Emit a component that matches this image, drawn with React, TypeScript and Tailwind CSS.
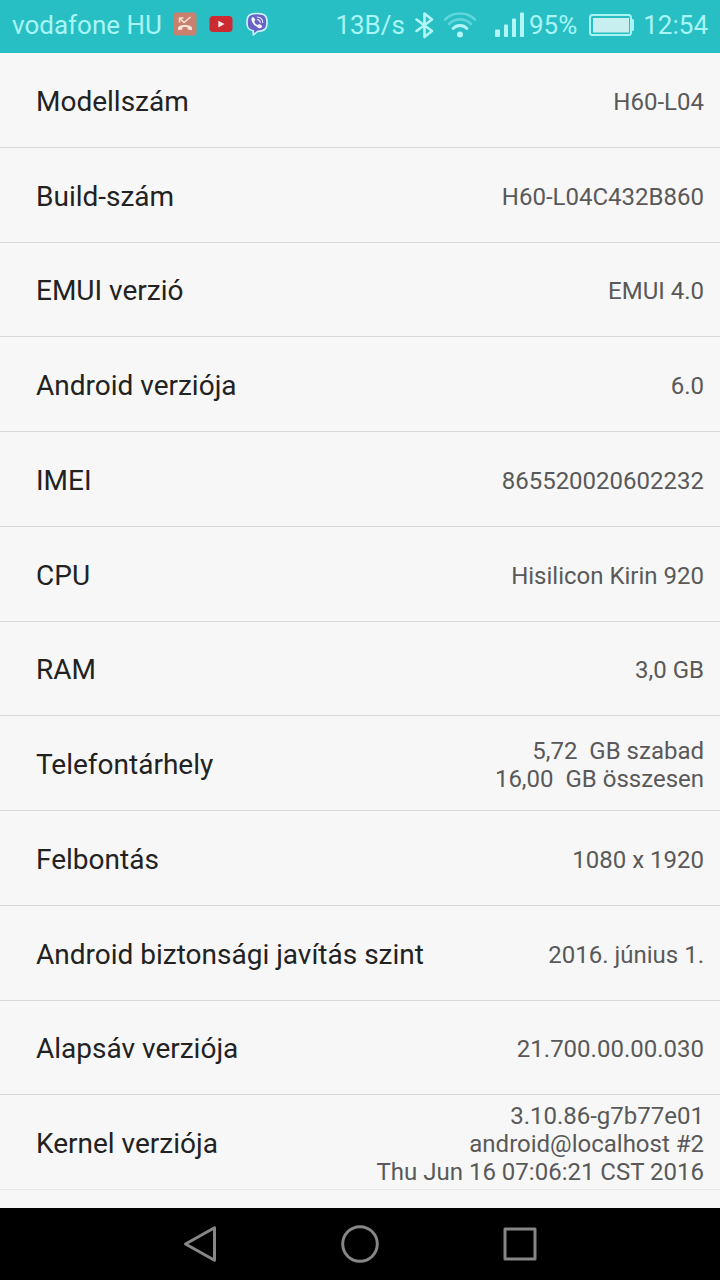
import { ReactNode } from "react";

type Spec = {
  label: string;
  value: string[];
};

const specs: Spec[] = [
  { label: "Modellszám", value: ["H60-L04"] },
  { label: "Build-szám", value: ["H60-L04C432B860"] },
  { label: "EMUI verzió", value: ["EMUI 4.0"] },
  { label: "Android verziója", value: ["6.0"] },
  { label: "IMEI", value: ["865520020602232"] },
  { label: "CPU", value: ["Hisilicon Kirin 920"] },
  { label: "RAM", value: ["3,0 GB"] },
  { label: "Telefontárhely", value: ["5,72  GB szabad", "16,00  GB összesen"] },
  { label: "Felbontás", value: ["1080 x 1920"] },
  { label: "Android biztonsági javítás szint", value: ["2016. június 1."] },
  { label: "Alapsáv verziója", value: ["21.700.00.00.030"] },
  {
    label: "Kernel verziója",
    value: [
      "3.10.86-g7b77e01",
      "android@localhost #2",
      "Thu Jun 16 07:06:21 CST 2016",
    ],
  },
];

export default function App() {
  return (
    <div className="flex min-h-screen flex-col bg-[#f7f7f7] font-[Roboto,sans-serif]">
      <StatusBar />
      <main className="flex flex-1 flex-col pb-[18px]">
        <dl className="grid flex-1 auto-rows-fr">
          {specs.map((spec) => (
            <SpecRow key={spec.label} spec={spec} />
          ))}
        </dl>
      </main>
      <NavBar />
    </div>
  );
}

const SpecRow = ({ spec }: { spec: Spec }) => {
  return (
    <div className="flex items-center justify-between gap-4 border-b border-[#d9d9d9] pl-9 pr-4 pt-1 last:border-[#e8e8e8]">
      <dt className="text-[28px] leading-8 text-[#222222]">{spec.label}</dt>
      <dd className="text-right text-2xl leading-7 text-[#595959]">
        {spec.value.map((line) => (
          <div key={line} className="whitespace-pre">
            {line}
          </div>
        ))}
      </dd>
    </div>
  );
};

const StatusBar = () => {
  return (
    <header className="flex h-[53px] items-center justify-between whitespace-nowrap bg-[#28bfc4] pb-1 pl-3 pr-3 text-[26px] leading-8 text-[#a8f5f6]">
      <div className="flex items-center gap-3">
        <span>vodafone HU</span>
        <div className="-ml-px flex items-center gap-3 pb-px">
          <MissedCallIcon />
          <YoutubeIcon />
          <ViberIcon />
        </div>
      </div>
      <div className="flex items-center gap-2">
        <span>13B/s</span>
        <BluetoothIcon />
        <WifiIcon />
        <div className="ml-2.5 flex items-center gap-1">
          <SignalIcon />
          <span>95%</span>
        </div>
        <div className="ml-1 flex items-center gap-2">
          <BatteryIcon />
          <span>12:54</span>
        </div>
      </div>
    </header>
  );
};

const MissedCallIcon = () => (
  <svg width="24" height="24" viewBox="0 0 24 24" aria-hidden="true">
    <rect x="0.5" y="0.5" width="23" height="23" rx="3" fill="#c9806c" />
    <path
      d="M6.500 6v4.500M6 6h4.500M6.500 6l4.500 4.500L17.500 5"
      fill="none"
      stroke="#f5e6dc"
      strokeWidth="1.4"
    />
    <path
      d="M5 18.200v-2.400c0-1.600 3.400-2.900 7-2.900s7 1.300 7 2.900v2.400l-4.200-.8-.4-2.100c-1.500-.5-3.300-.5-4.800 0l-.4 2.100z"
      fill="#f5e6dc"
    />
  </svg>
);

const YoutubeIcon = () => (
  <svg width="24" height="24" viewBox="0 0 24 24" aria-hidden="true">
    <rect x="0.5" y="4" width="23" height="16" rx="3.5" fill="#cb2a30" />
    <path d="M9.300 8.700l6.200 3.300-6.200 3.400z" fill="#fbe9e9" />
  </svg>
);

const ViberIcon = () => (
  <svg width="24" height="24" viewBox="0 0 24 24" aria-hidden="true">
    <path
      d="M12 1.500c7.500 0 10 2.200 10 9s-3 8.800-9.500 9L8.300 23v-4.200C3.300 17.600 2 15.600 2 10.500c0-6.800 2.500-9 10-9z"
      fill="#6a62c4"
      stroke="#d0f8ff"
      strokeWidth="1.600"
      strokeLinejoin="round"
    />
    <path
      d="M6.800 5.700c.8-.9 1.600-.9 2.200 0l1.100 1.600c.5.8-.6 1.400-.7 2.100.3 1.700 1.600 3 3.300 3.500.7 0 1.100-1.200 2.100-.7l1.900 1.200c.8.600.5 1.400-.2 2.100-.9.900-1.800.9-2.900.4-3.500-1.600-6-4.300-7.100-7.700-.2-.9-.2-1.900.3-2.500z"
      fill="#f4f8ff"
    />
    <path
      d="M12.200 5c3.500.2 5.500 2.200 5.600 5.500M12.400 7.600c1.800.2 2.800 1.100 2.900 2.900"
      fill="none"
      stroke="#d8e4ff"
      strokeWidth="1.100"
      strokeLinecap="round"
    />
  </svg>
);

const BluetoothIcon = () => (
  <svg width="22" height="28" viewBox="0 0 22 28" aria-hidden="true">
    <path
      d="M3.500 8.500L19 20l-7.500 6V2.500L19 8.500 3.500 20"
      fill="none"
      stroke="#b4f6f8"
      strokeWidth="2.600"
      strokeLinejoin="round"
      strokeLinecap="round"
    />
  </svg>
);

const WifiIcon = () => (
  <svg width="34" height="28" viewBox="0 0 34 28" fill="none" aria-hidden="true">
    <circle cx="17" cy="23.500" r="3" fill="#b4f6f8" />
    <path
      d="M10 17.500c3.800-4 10.200-4 14 0"
      stroke="#b4f6f8"
      strokeWidth="2.800"
      strokeLinecap="round"
    />
    <g stroke="#5ed6db" strokeWidth="2.600" strokeLinecap="round">
      <path d="M6 13c6-6.200 16-6.200 22 0" />
      <path d="M2 8.500c8.200-8 21.800-8 30 0" />
    </g>
  </svg>
);

const SignalIcon = () => (
  <svg width="30" height="28" viewBox="0 0 30 28" fill="#b4f6f8" aria-hidden="true">
    <rect x="0" y="18.500" width="5" height="7.500" rx="1" />
    <rect x="9" y="13.500" width="4" height="12.500" rx="1" />
    <rect x="17" y="7.500" width="4" height="18.500" rx="1" />
    <rect x="25" y="1.500" width="4" height="24.500" rx="1" />
  </svg>
);

const BatteryIcon = () => (
  <svg width="46" height="24" viewBox="0 0 46 24" aria-hidden="true">
    <rect
      x="1"
      y="2"
      width="41"
      height="20"
      rx="2.500"
      fill="none"
      stroke="currentColor"
      strokeWidth="2"
    />
    <rect x="4" y="5" width="36" height="14.500" fill="#c8efef" />
    <path d="M42 6h1.500q1.500 0 1.500 1.500v9q0 1.500-1.500 1.500H42z" fill="currentColor" />
  </svg>
);

const NavButton = ({ label, children }: { label: string; children: ReactNode }) => (
  <button type="button" aria-label={label} className="px-[60px] py-4">
    <svg
      width="40"
      height="40"
      viewBox="0 0 40 40"
      fill="none"
      stroke="#868686"
      strokeWidth="3"
      strokeLinejoin="round"
      aria-hidden="true"
    >
      {children}
    </svg>
  </button>
);

const NavBar = () => {
  return (
    <nav className="flex h-[72px] items-center justify-center bg-black">
      <NavButton label="Vissza">
        <path d="M5.500 20L34.500 3.700v32.600z" />
      </NavButton>
      <NavButton label="Kezdőképernyő">
        <circle cx="20" cy="20" r="17.300" />
      </NavButton>
      <NavButton label="Legutóbbiak">
        <rect x="5" y="5" width="30" height="30" />
      </NavButton>
    </nav>
  );
};
